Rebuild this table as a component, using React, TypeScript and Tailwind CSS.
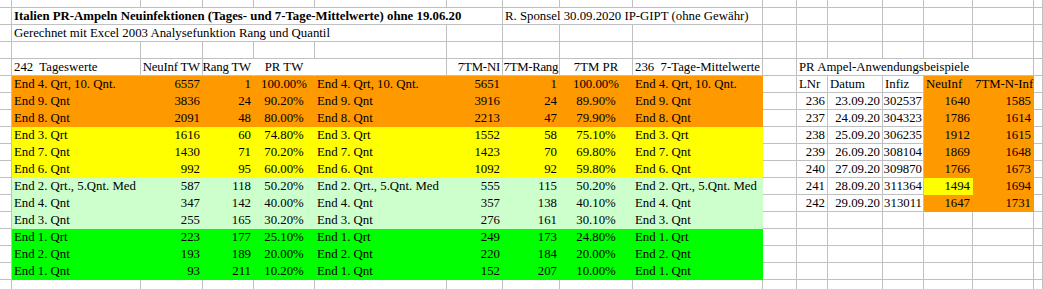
import React from 'react';

type Fill = 'w' | 'o' | 'y' | 'lg' | 'g';

interface CellSpec {
  t?: string;
  a?: 'l' | 'r' | 'c';
  f?: Fill;
  span?: string;
  nr?: boolean;
  b?: boolean;
  x?: string;
}

const fills: Record<Fill, string> = {
  w: 'bg-white border-[#c0c0c0]',
  o: 'bg-[#ff9900] border-[#ff9900]',
  y: 'bg-[#ffff00] border-[#ffff00]',
  lg: 'bg-[#ccffcc] border-[#ccffcc]',
  g: 'bg-[#00ff00] border-[#00ff00]',
};

const aligns = {
  l: 'justify-start',
  r: 'justify-end',
  c: 'justify-center',
};

const empty = (n: number): CellSpec[] => Array.from({ length: n }, () => ({}));

// left table: B..J
const band = (
  f: Fill,
  label: string,
  tw: [string, string, string],
  tm: [string, string, string]
): CellSpec[] => [
  { t: label, f },
  { t: tw[0], a: 'r', f },
  { t: tw[1], a: 'r', f },
  { t: tw[2], a: 'c', f },
  { t: label, f },
  { t: tm[0], a: 'r', f },
  { t: tm[1], a: 'r', f },
  { t: tm[2], a: 'c', f },
  { t: label, f },
];

// right table: K..Q
const example = (nr: string, date: string, infiz: string, neu: string, tm: string, neuFill: Fill = 'o'): CellSpec[] => [
  {},
  { t: nr, a: 'r' },
  { t: date, a: 'r' },
  { t: infiz, a: 'r', x: 'pr-[1px]' },
  { t: neu, a: 'r', f: neuFill },
  { t: tm, a: 'r', f: 'o' },
  {},
];

const bands: [Fill, string, [string, string, string], [string, string, string]][] = [
  ['o', 'End 4. Qrt, 10. Qnt.', ['6557', '1', '100.00%'], ['5651', '1', '100.00%']],
  ['o', 'End 9. Qnt', ['3836', '24', '90.20%'], ['3916', '24', '89.90%']],
  ['o', 'End 8. Qnt', ['2091', '48', '80.00%'], ['2213', '47', '79.90%']],
  ['y', 'End 3. Qrt', ['1616', '60', '74.80%'], ['1552', '58', '75.10%']],
  ['y', 'End 7. Qnt', ['1430', '71', '70.20%'], ['1423', '70', '69.80%']],
  ['y', 'End 6. Qnt', ['992', '95', '60.00%'], ['1092', '92', '59.80%']],
  ['lg', 'End 2. Qrt., 5.Qnt. Med', ['587', '118', '50.20%'], ['555', '115', '50.20%']],
  ['lg', 'End 4. Qnt', ['347', '142', '40.00%'], ['357', '138', '40.10%']],
  ['lg', 'End 3. Qnt', ['255', '165', '30.20%'], ['276', '161', '30.10%']],
  ['g', 'End 1. Qrt', ['223', '177', '25.10%'], ['249', '173', '24.80%']],
  ['g', 'End 2. Qnt', ['193', '189', '20.00%'], ['220', '184', '20.00%']],
  ['g', 'End 1. Qnt', ['93', '211', '10.20%'], ['152', '207', '10.00%']],
];

const right: CellSpec[][] = [
  [
    {},
    { t: 'LNr' },
    { t: 'Datum' },
    { t: 'Infiz' },
    { t: 'NeuInf', f: 'o' },
    { t: '7TM-N-Inf', f: 'o' },
    {},
  ],
  example('236', '23.09.20', '302537', '1640', '1585'),
  example('237', '24.09.20', '304323', '1786', '1614'),
  example('238', '25.09.20', '306235', '1912', '1615'),
  example('239', '26.09.20', '308104', '1869', '1648'),
  example('240', '27.09.20', '309870', '1766', '1673'),
  example('241', '28.09.20', '311364', '1494', '1694', 'y'),
  example('242', '29.09.20', '313011', '1647', '1731'),
  empty(7),
  empty(7),
  empty(7),
  empty(7),
];

const rows: CellSpec[][] = [
  empty(17),
  [
    {},
    { t: 'Italien PR-Ampeln Neuinfektionen (Tages- und 7-Tage-Mittelwerte) ohne 19.06.20', span: 'col-span-6', b: true },
    { t: 'R. Sponsel 30.09.2020 IP-GIPT (ohne Gewähr)', span: 'col-span-3' },
    ...empty(7),
  ],
  [
    {},
    { t: 'Gerechnet mit Excel 2003 Analysefunktion Rang und Quantil', span: 'col-span-5' },
    ...empty(11),
  ],
  empty(17),
  [
    {},
    { t: '242  Tageswerte' },
    { t: 'NeuInf TW', a: 'r', x: 'tracking-[-0.2px]' },
    { t: 'Rang TW', a: 'r', nr: true, x: 'tracking-[-0.2px]' },
    { t: 'PR TW', a: 'c', nr: true },
    {},
    { t: '7TM-NI', a: 'r', x: 'tracking-[-0.2px]' },
    { t: '7TM-Rang', a: 'r', x: 'tracking-[-0.3px] pr-[1px]' },
    { t: '7TM PR', a: 'c' },
    { t: '236  7-Tage-Mittelwerte' },
    {},
    { t: 'PR Ampel-Anwendungsbeispiele', span: 'col-span-5' },
    {},
  ],
  ...bands.map(([f, label, tw, tm], i) => [{}, ...band(f, label, tw, tm), ...right[i]]),
  empty(17),
];

function Cell({ c }: { c: CellSpec }) {
  return (
    <div
      className={`flex items-start whitespace-pre border-r border-b px-[2px] pt-[1px] leading-[15px] ${
        fills[c.f ?? 'w']
      } ${aligns[c.a ?? 'l']} ${c.span ?? ''} ${c.nr ? 'border-r-transparent' : ''} ${c.b ? 'font-bold' : ''} ${
        c.x ?? ''
      }`}
    >
      {c.t}
    </div>
  );
}

export default function App() {
  return (
    <div className="w-[1043px] h-[289px] overflow-hidden bg-white text-black [font-family:'Liberation_Serif',serif] text-[12.8px]">
      <div className="grid grid-cols-[12px_129px_62px_51px_61px_132px_56px_57px_73px_130px_34px_31px_55px_41px_49px_61px_1fr] grid-rows-[8px_repeat(16,17px)_17px]">
        {rows.map((row, r) => row.map((c, i) => <Cell key={`${r}-${i}`} c={c} />))}
      </div>
    </div>
  );
}
